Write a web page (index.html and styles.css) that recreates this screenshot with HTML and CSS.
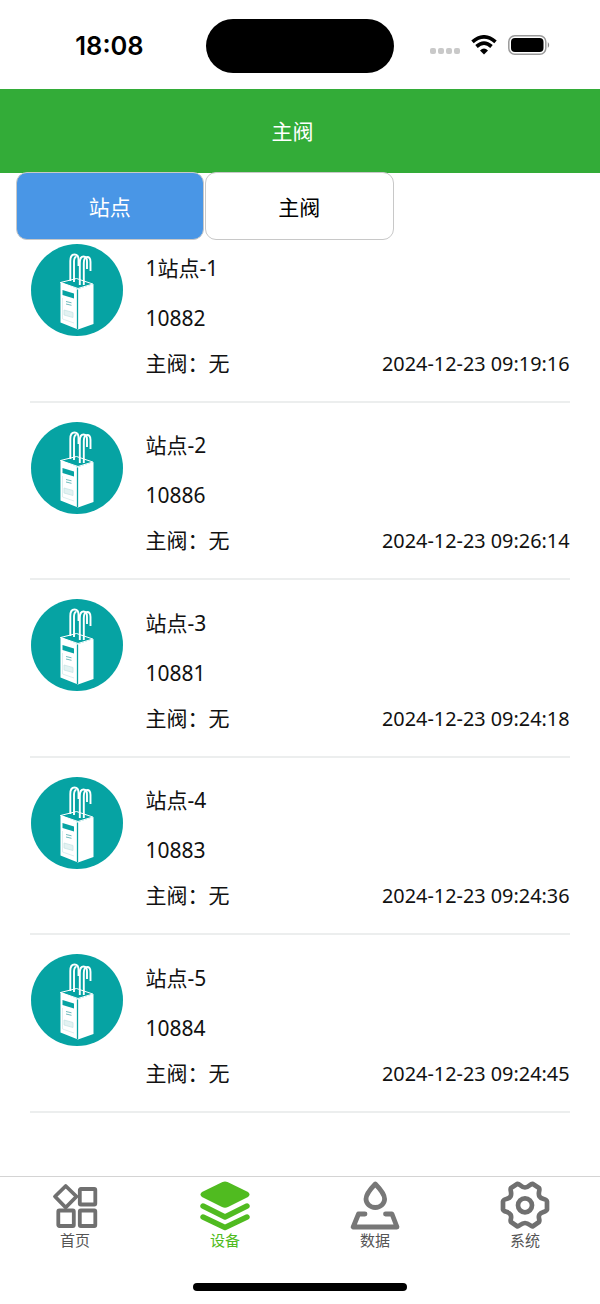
FILE: index.html
```html
<!DOCTYPE html>
<html lang="zh-CN">
<head>
<meta charset="utf-8">
<title>主阀</title>
<link rel="stylesheet" href="styles.css">
</head>
<body>
<svg class="defs" aria-hidden="true">
  <symbol id="device" viewBox="0 0 92 92">
    <circle cx="46" cy="46" r="46" fill="#06a3a3"/>
    <path d="M29.500 38.500 45.500 34.500 61.800 40 47 44.500Z" fill="#06a3a3" stroke="#fff" stroke-width="1"/>
    <path d="M29.500 38 47 45V85.500L29.500 78.500ZM47 45 62.500 40V80L47 85.500Z" fill="#fff"/>
    <path d="M46.500 45.500V85" stroke="#06a3a3" stroke-width="1.300"/>
    <path d="M31.500 46 43 49.500V54.500L31.500 51Z" fill="#06a3a3"/>
    <path d="M35 57.500 40.500 58.800M35 60 40.500 61.300" stroke="#70bcbd" stroke-width="1"/>
    <path d="M33 66 42 68.500V73.500L33 71Z" fill="#e3f2f2" stroke="#c8e5e5" stroke-width=".8"/>
    <path d="M31.500 54V75L43 79" fill="none" stroke="#d4eaea" stroke-width=".8"/>
    <g fill="none" stroke="#fff" stroke-width="1.900">
      <path d="M39.300 37V17Q39.300 10.500 43.500 10.500T47.500 16V22"/>
      <path d="M43 38V17Q43.500 12.500 45.500 13"/>
      <path d="M48.800 41V19Q48.800 12.500 52.500 12.500T56 18V25"/>
      <path d="M52.800 41V19Q53 13 56.200 13T59.500 18V27"/>
    </g>
  </symbol>
</svg>
<div class="screen">
  <div class="status">
    <span class="clock">18:08</span>
    <span class="island"></span>
    <span class="signals">
      <span class="dots"><i></i><i></i><i></i><i></i></span>
      <svg class="wifi" viewBox="0 0 26 20">
        <g fill="none" stroke="#000" stroke-width="3.700"><path d="M1.500 6.800Q13-3 24.500 6.800"/><path d="M5.500 11.500Q13 4.800 20.500 11.500"/></g>
        <path d="M13 19.500 9 15.400Q13 11.600 17 15.400Z"/>
      </svg>
      <svg class="battery" viewBox="0 0 42 20"><rect x=".8" y=".8" width="37" height="18.400" rx="6" fill="none" stroke="#999" stroke-width="1.500"/><rect x="3" y="3" width="32.500" height="14" rx="4"/><path d="M39.800 7Q42.600 10 39.800 13Z" fill="#888"/></svg>
    </span>
  </div>
  <header class="title">主阀</header>
  <nav class="tabs"><div class="tab active">站点</div><div class="tab">主阀</div></nav>
  <main class="list">
    <article class="row"><svg class="avatar"><use href="#device"/></svg><div class="info"><div class="name">1站点-1</div><div class="code">10882</div><div class="meta"><span>主阀：无</span><time>2024-12-23 09:19:16</time></div></div></article>
    <article class="row"><svg class="avatar"><use href="#device"/></svg><div class="info"><div class="name">站点-2</div><div class="code">10886</div><div class="meta"><span>主阀：无</span><time>2024-12-23 09:26:14</time></div></div></article>
    <article class="row"><svg class="avatar"><use href="#device"/></svg><div class="info"><div class="name">站点-3</div><div class="code">10881</div><div class="meta"><span>主阀：无</span><time>2024-12-23 09:24:18</time></div></div></article>
    <article class="row"><svg class="avatar"><use href="#device"/></svg><div class="info"><div class="name">站点-4</div><div class="code">10883</div><div class="meta"><span>主阀：无</span><time>2024-12-23 09:24:36</time></div></div></article>
    <article class="row"><svg class="avatar"><use href="#device"/></svg><div class="info"><div class="name">站点-5</div><div class="code">10884</div><div class="meta"><span>主阀：无</span><time>2024-12-23 09:24:45</time></div></div></article>
  </main>
  <footer class="bottom">
    <div class="items">
      <div class="item"><svg class="icon" viewBox="0 0 50 50" fill="none" stroke="#707070" stroke-width="3.800" stroke-linejoin="round"><path d="M15.700 5 26.500 15.500 15.700 26.500 5 15.500Z"/><rect x="29.800" y="8" width="15.500" height="15.500" rx="1"/><rect x="8.300" y="29.500" width="15.500" height="15.500" rx="1"/><rect x="29.800" y="29.500" width="15.500" height="15.500" rx="1"/></svg><span>首页</span></div>
      <div class="item current"><svg class="icon" viewBox="0 0 50 50"><path d="M22.500 1 Q25 0 27.500 1L48 11Q51 13.500 48 16L28 26Q25 27.500 22 26L2 16Q-1 13.500 2 11Z" fill="#50bb20"/><path d="M3 25 25 36 47 25M3 36 25 46.500 47 36" fill="none" stroke="#50bb20" stroke-width="5.400" stroke-linecap="round" stroke-linejoin="round"/></svg><span>设备</span></div>
      <div class="item"><svg class="icon" viewBox="0 0 50 50" fill="none" stroke="#777" stroke-width="4.800" stroke-linecap="round" stroke-linejoin="round"><path d="M25.300 3Q16 12.500 16 18A9.300 8.500 0 0 0 34.600 18Q34.600 12.500 25.300 3Z"/><path d="M15 33H8.500L3.200 46H47L42 33H35.500"/></svg><span>数据</span></div>
      <div class="item"><svg class="icon" viewBox="0 0 50 50" fill="none" stroke="#707070" stroke-width="4.700" stroke-linejoin="round"><path d="M17.500 2.800C20 3 21 6.500 25 6.500S30 3 32.500 2.800L39 7C40.500 9 37.500 12 39.500 15.500S46.500 17 47 20.500V28.500C46 31.500 41.500 30.500 39.500 33.500S40.500 39 39 41L32.500 45.500C30 45 29 42 25 42S20 45 17.500 45.500L11 41C9.500 39 12.500 37 10.500 33.500S4 31.500 3 28.500V20.500C3.500 17 8.500 19 10.500 15.500S9.500 9 11 7Z"/><circle cx="25" cy="24.300" r="7"/></svg><span>系统</span></div>
    </div>
    <div class="home"></div>
  </footer>
</div>
</body>
</html>
```
FILE: styles.css
```css
* { box-sizing: border-box; }
body { margin: 0; background: #fff; color: #111; font-family: "Noto Sans", "Noto Sans CJK SC", sans-serif; }
.defs { position: absolute; width: 0; height: 0; }
.screen { width: 600px; height: 1304px; display: flex; flex-direction: column; overflow: hidden; }
.status { height: 89px; display: grid; grid-template-columns: 206px 188px 206px; align-items: center; flex: none; }
.clock { font: 600 25.500px/30px Inter, sans-serif; text-align: center; padding-left: 13px; padding-top: 2px; color: #000; }
.island { height: 54px; border-radius: 27px; background: #000; margin-top: 2px; }
.signals { display: flex; align-items: center; padding-left: 36px; }
.dots { display: flex; gap: 2.600px; margin-top: 13px; }
.dots i { width: 5.500px; height: 5.500px; border-radius: 2px; background: #c9c9c9; }
.wifi { width: 26px; height: 20px; margin-left: 11px; }
.battery { width: 42px; height: 20px; margin-left: 11px; }
.title { height: 84px; flex: none; background: #33ac38; color: #fff; font-size: 21px; line-height: 84px; text-align: center; padding-right: 15px; }
.tabs { display: flex; gap: 1px; height: 68px; margin: -1px 0 0 15.500px; flex: none; color: #000; }
.tab { width: 188.500px; border: 1px solid #c8c8c8; border-radius: 11px; background: #fff; text-align: center; font-size: 21px; line-height: 69px; }
.active { background: #4996e6; color: #fff; }
.list { padding: 0 30.500px 0 30px; margin-top: -15px; }
.row { height: 177.500px; border-bottom: 2px solid #eceeee; padding-top: 19px; display: flex; }
.avatar { width: 92px; height: 92px; margin-left: .5px; flex: none; }
.info { flex: 1; margin-left: 23px; padding-top: 3.500px; font-size: 21px; }
.name { height: 40px; line-height: 40px; }
.code { height: 58px; line-height: 60px; }
.meta { height: 34px; line-height: 34px; display: flex; justify-content: space-between; }
.meta time { font-size: 19.850px; padding-top: 1px; }
.bottom { height: 128px; border-top: 1.500px solid #d4d4d4; margin-top: auto; flex: none; display: flex; flex-direction: column; align-items: center; }
.items { display: flex; width: 100%; height: 106px; padding-top: 4px; }
.item { flex: 1; display: flex; flex-direction: column; align-items: center; font-size: 15px; line-height: 18px; color: #555; }
.item.current { color: #50bb20; }
.icon { width: 50px; height: 50px; }
.home { width: 214px; height: 8px; border-radius: 4px; background: #000; }
```
